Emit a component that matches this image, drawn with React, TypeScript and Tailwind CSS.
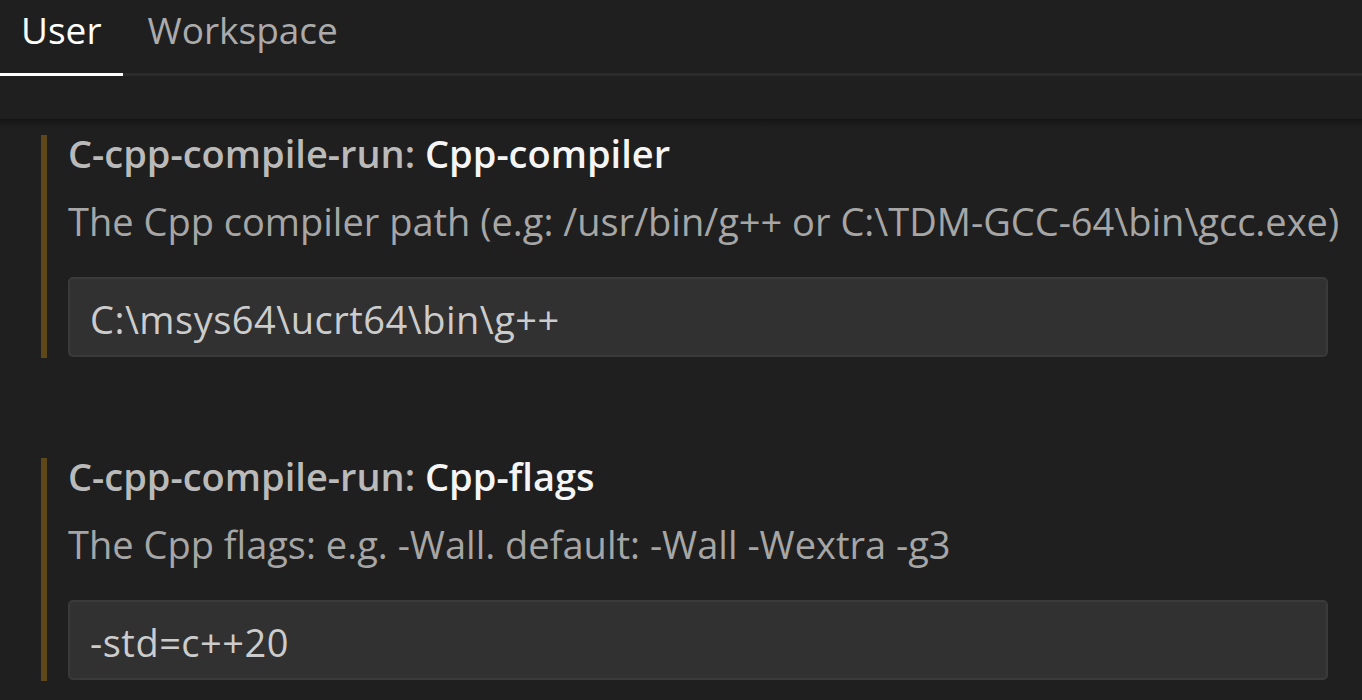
import React from "react";

type Setting = {
  category: string;
  name: string;
  description: string;
  value: string;
};

const settings: Setting[] = [
  {
    category: "C-cpp-compile-run: ",
    name: "Cpp-compiler",
    description:
      "The Cpp compiler path (e.g: /usr/bin/g++ or C:\\TDM-GCC-64\\bin\\gcc.exe)",
    value: "C:\\msys64\\ucrt64\\bin\\g++",
  },
  {
    category: "C-cpp-compile-run: ",
    name: "Cpp-flags",
    description: "The Cpp flags: e.g. -Wall. default: -Wall -Wextra -g3",
    value: "-std=c++20",
  },
];

function SettingItem({ s }: { s: Setting }) {
  return (
    <div className="border-l-[6px] border-[#5e4719] pb-px pl-[21px]">
      <div className="whitespace-nowrap text-[38px] font-semibold leading-[37px] text-[#bababa]">
        {s.category}
        <span className="text-[#f5f5f5]">{s.name}</span>
      </div>
      <div className="mt-[31px] whitespace-nowrap text-[38px] leading-[37px] text-[#a6a6a6]">
        {s.description}
      </div>
      <input
        readOnly
        value={s.value}
        className="mt-[37px] block h-[80px] w-full rounded-[5px] border-2 border-[#3a3a3a] bg-[#313131] px-[20px] pt-[3px] text-[38px] tracking-[0.5px] text-[#cccccc] outline-none"
      />
    </div>
  );
}

export default function App() {
  return (
    <div
      className="h-[700px] w-full overflow-hidden bg-[#1f1f1f]"
      style={{ fontFamily: '"Open Sans", "Noto Sans", sans-serif' }}
    >
      <div className="flex h-[76px] border-b-[3px] border-[#2b2b2b]">
        <div className="-mb-[3px] flex items-start border-b-[3px] border-white px-[21px] pt-[2px] text-[37px] text-white">
          User
        </div>
        <div className="flex items-start pl-[25px] pr-[24px] pt-[2px] text-[37px] text-[#ababab]">
          Workspace
        </div>
      </div>
      <div className="h-[43px]" />
      <div className="h-[9px] bg-gradient-to-b from-[#151515] to-[#1f1f1f]" />
      <div className="pl-[41px] pr-[34px] pt-[7px]">
        {settings.map((s, i) => (
          <div key={s.name} className={i > 0 ? "mt-[100px]" : ""}>
            <SettingItem s={s} />
          </div>
        ))}
      </div>
    </div>
  );
}
